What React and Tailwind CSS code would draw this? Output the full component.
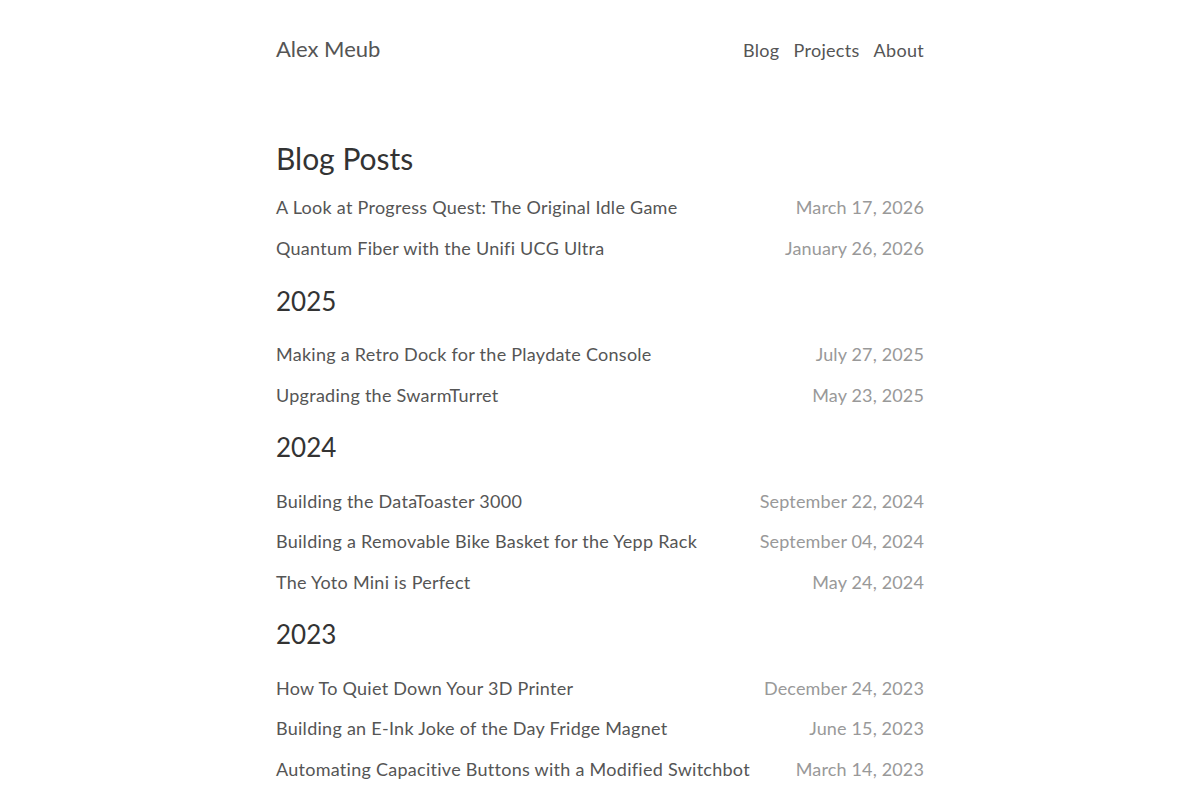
import React from 'react';

const posts = [
  {
    year: null,
    items: [
      { title: 'A Look at Progress Quest: The Original Idle Game', date: 'March 17, 2026' },
      { title: 'Quantum Fiber with the Unifi UCG Ultra', date: 'January 26, 2026' },
    ],
  },
  {
    year: '2025',
    items: [
      { title: 'Making a Retro Dock for the Playdate Console', date: 'July 27, 2025' },
      { title: 'Upgrading the SwarmTurret', date: 'May 23, 2025' },
    ],
  },
  {
    year: '2024',
    items: [
      { title: 'Building the DataToaster 3000', date: 'September 22, 2024' },
      { title: 'Building a Removable Bike Basket for the Yepp Rack', date: 'September 04, 2024' },
      { title: 'The Yoto Mini is Perfect', date: 'May 24, 2024' },
    ],
  },
  {
    year: '2023',
    items: [
      { title: 'How To Quiet Down Your 3D Printer', date: 'December 24, 2023' },
      { title: 'Building an E-Ink Joke of the Day Fridge Magnet', date: 'June 15, 2023' },
      { title: 'Automating Capacitive Buttons with a Modified Switchbot', date: 'March 14, 2023' },
    ],
  },
];

function PostRow({ post }) {
  return (
    <a href="#" className="flex h-[40.6px] items-center justify-between gap-6 text-[18px] leading-[27px] tracking-[0.27px]">
      <span className="text-[#555]">{post.title}</span>
      <span className="shrink-0 text-[#999] tracking-[0.15px]">{post.date}</span>
    </a>
  );
}

export default function App() {
  return (
    <div className="min-h-screen bg-white font-['Lato','Noto_Sans',sans-serif]">
      <div className="mx-auto max-w-[648px] pt-[32px]">
        {/* Header */}
        <header className="flex items-baseline justify-between">
          <a href="#" className="text-[22px] leading-[34px] text-[#555]">Alex Meub</a>
          <nav className="flex gap-[14px] text-[18px] tracking-[0.3px] text-[#555]">
            <a href="#">Blog</a>
            <a href="#">Projects</a>
            <a href="#">About</a>
          </nav>
        </header>

        <main>
          <h1 className="mt-[74px] mb-[11.7px] text-[30px] leading-[36px] text-[#333]">Blog Posts</h1>
          {posts.map((group, i) => (
            <section key={i}>
              {group.year && (
                <h2 className="mt-[15.7px] mb-[17.7px] text-[26px] leading-[32px] text-[#333]">{group.year}</h2>
              )}
              {group.items.map((post) => (
                <PostRow key={post.title} post={post} />
              ))}
            </section>
          ))}
        </main>
      </div>
    </div>
  );
}
